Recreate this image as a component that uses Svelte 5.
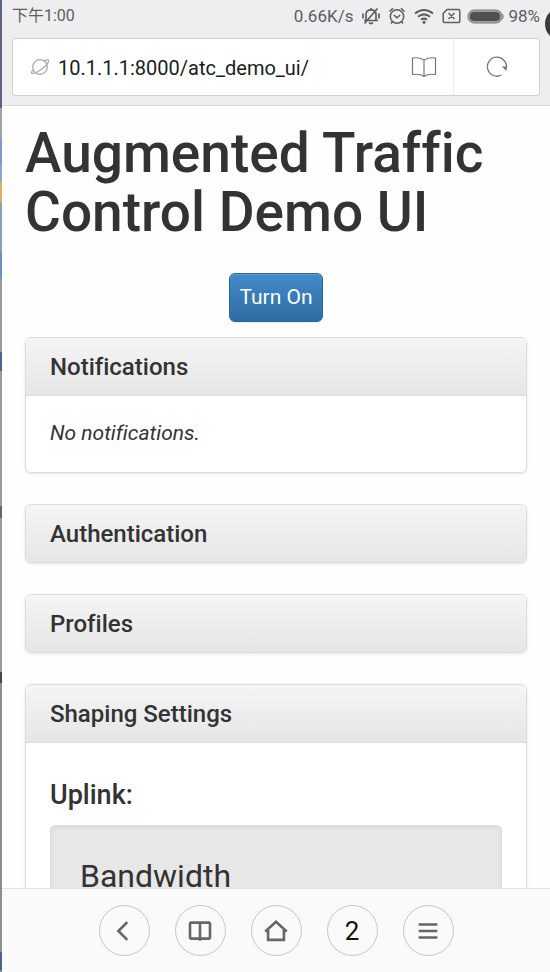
<script>
  const address = '10.1.1.1:8000/atc_demo_ui/';
  let shaping = $state(false);
</script>

<div class="desktop">
  <div class="edge" aria-hidden="true"></div>

  <div class="screen">
    <header>
      <div class="status">
        <span class="time">下午1:00</span>
        <span class="rate">0.66K/s</span>
        <svg class="bell" width="20" height="20" viewBox="0 0 20 20" fill="none" stroke="#5d5d60" stroke-width="1.7">
          <path d="M5 14V8.500C5 5.300 7 3.800 10 3.800S15 5.300 15 8.500V14M3 14.500H17M8 16.500Q10 18.500 12 16.500M16.500 2.500L3.500 17.500M10 3.500V2M2 7.500V12.500M18 7.500V12.500" />
        </svg>
        <svg class="alarm" width="18" height="20" viewBox="0 0 18 20" fill="none" stroke="#5d5d60" stroke-width="1.500">
          <circle cx="9" cy="10.500" r="6.700" />
          <path d="M1.500 5.500L5 2.200M16.500 5.500L13 2.200M5.800 9L9 11.800L12.200 9M4.500 15.500L3 17.500M13.500 15.500L15 17.500" />
        </svg>
        <svg class="wifi" width="20" height="18" viewBox="0 0 20 18" fill="none" stroke="#5d5d60" stroke-width="2">
          <path d="M1 6.500Q10 -.5 19 6.500M4 9.800Q10 5 16 9.800M7 12.800Q10 10.500 13 12.800" />
          <circle cx="10" cy="15.200" r="1.500" fill="#5d5d60" stroke="none" />
        </svg>
        <svg class="sim" width="19" height="16" viewBox="0 0 19 16" fill="none" stroke="#5d5d60" stroke-width="1.500">
          <path d="M5 1.500H16.500Q17.800 1.500 17.800 2.800V13.200Q17.800 14.500 16.500 14.500H2.500Q1.200 14.500 1.200 13.200V5.500ZM6.500 5L12.500 11M12.500 5L6.500 11" />
        </svg>
        <svg class="battery" width="37" height="15" viewBox="0 0 37 15">
          <rect x="1" y="1" width="34" height="13" rx="6" fill="#a2a2a4" stroke="#7c7c7f" stroke-width="1" />
          <path d="M35.500 5Q37 7.500 35.500 10" fill="none" stroke="#7c7c7f" />
          <rect x="3" y="3" width="30" height="9" rx="4" fill="#505052" />
        </svg>
        <span class="percent">98%</span>
      </div>

      <div class="address">
        <svg width="20" height="20" viewBox="0 0 20 20" fill="none" stroke="#aaa" stroke-width="1.300">
          <circle cx="10" cy="10" r="7.300" />
          <path d="M14 4Q18.800 1.500 18.600 4.200C18 7.500 13 11.500 8.500 14.200C4.500 16.700 1 17.300 1.500 15.500Q1.900 14 3.600 12.500" />
        </svg>
        <input aria-label="Address" type="text" value={address} />
        <button class="reader" aria-label="Reading list">
          <svg width="26" height="22" viewBox="0 0 26 22" fill="none" stroke="#777" stroke-width="1.200">
            <path d="M13 4Q8 1 1.500 2V18.500Q9 17.500 13 20.500Q17 17.500 24.500 18.500V2Q18 1 13 4V20.500" />
          </svg>
        </button>
        <button class="reload" aria-label="Reload">
          <svg width="24" height="24" viewBox="0 0 24 24" fill="none" stroke="#777" stroke-width="1.300">
            <path d="M16.500 20A9.500 9.500 0 1 1 21.300 13" />
            <path d="M16.800 11.500H22.300L21.300 16Z" fill="#777" stroke="none" />
          </svg>
        </button>
      </div>
    </header>

    <main>
      <h1>Augmented Traffic Control Demo UI</h1>
      <button class="toggle" aria-pressed={shaping} onclick={() => (shaping = !shaping)}>
        {shaping ? 'Turn Off' : 'Turn On'}
      </button>

      <section class="panel">
        <h4>Notifications</h4>
        <div class="body"><p><i>No notifications.</i></p></div>
      </section>
      <section class="panel"><h4>Authentication</h4></section>
      <section class="panel"><h4>Profiles</h4></section>
      <section class="panel">
        <h4>Shaping Settings</h4>
        <div class="body settings">
          <h3>Uplink:</h3>
          <div class="well"><h2>Bandwidth</h2></div>
        </div>
      </section>
    </main>

    <nav>
      <button aria-label="Back">
        <svg width="30" height="30" viewBox="0 0 30 30"><path d="M18.500 5.500L9 15L18.500 24.500" /></svg>
      </button>
      <button aria-label="Bookmarks">
        <svg width="30" height="30" viewBox="0 0 30 30"><path d="M15 6H5.500Q4.300 6 4.300 7.200V22Q4.300 23.200 5.500 23.200H24.500Q25.700 23.200 25.700 22V7.200Q25.700 6 24.500 6H15M15 6V25.500" /></svg>
      </button>
      <button aria-label="Home">
        <svg width="30" height="30" viewBox="0 0 30 30"><path d="M3.500 15.500L15 5L26.500 15.500M6.500 14V24.500H23.500V14" /></svg>
      </button>
      <button aria-label="2 open tabs">2</button>
      <button aria-label="Menu">
        <svg width="30" height="30" viewBox="0 0 30 30"><path d="M5 8H25M5 15H25M5 22H25" /></svg>
      </button>
    </nav>
  </div>

  <div class="bubble" aria-hidden="true"></div>
</div>

<style>
  :global(body) {
    margin: 0;
  }

  .desktop {
    position: relative;
    display: flex;
    height: 100vh;
    overflow: hidden;
    font-family: Roboto, 'Noto Sans CJK SC', sans-serif;
    font-variant-ligatures: none;
    color: #333;
  }

  .desktop * {
    box-sizing: border-box;
  }

  button,
  input {
    font-family: inherit;
    border: 0;
    padding: 0;
    background: none;
  }

  svg {
    display: block;
    flex: none;
  }

  .edge {
    flex: none;
    width: 2px;
    background: linear-gradient(
      #5c6285 108px, #a2a2a2 108px 138px, #7b9bcf 138px 165px, #90a6c6 165px 182px,
      #d6b066 182px 203px, #8c9fb8 203px 252px, #6f90bd 252px 279px, #999 279px 352px,
      #48658f 352px 371px, #999 371px 506px, #75615c 506px 518px, #999 518px 672px,
      #4d4438 672px 683px, #8e8e8e 683px 952px, #4b6388 952px 970px, #888 970px
    );
  }

  .screen {
    flex: 1;
    min-width: 0;
    display: flex;
    flex-direction: column;
    background: #fefefe;
  }

  header {
    flex: none;
    padding: 0 10px 9px;
    background: #eeeef0;
    border-bottom: 1px solid #d9d9db;
  }

  .status {
    display: flex;
    align-items: center;
    height: 38px;
    padding-bottom: 6px;
    font-size: 17px;
    line-height: 20px;
    color: #5d5d60;
  }

  .time {
    margin-right: auto;
    font-size: 16px;
  }

  .bell { margin-left: 8px; }
  .alarm { margin-left: 7px; }
  .wifi { margin-left: 8px; }
  .sim { margin-left: 8px; }
  .battery { margin-left: 6px; }
  .percent { margin-left: 4px; }

  .address {
    display: flex;
    align-items: center;
    height: 58px;
    padding-left: 17px;
    border: 1px solid #cfcfd1;
    border-radius: 3px;
    background: #fff;
  }

  .address input {
    flex: 1;
    min-width: 0;
    height: 26px;
    padding-top: 2px;
    margin-left: 8px;
    font-size: 20px;
    color: #1c1c1c;
    outline: 0;
  }

  .reader,
  .reload {
    align-self: stretch;
    display: flex;
    align-items: center;
    justify-content: center;
  }

  .reader {
    width: 58px;
  }

  .reload {
    width: 86px;
    border-left: 1px solid #ececec;
  }

  main {
    flex: 1;
    min-height: 0;
    overflow: hidden;
    display: flex;
    flex-direction: column;
    padding: 18px 23px 0;
  }

  h1,
  h2,
  h3,
  h4,
  p {
    margin: 0;
  }

  h1 {
    font-size: 55px;
    line-height: 59px;
    font-weight: 500;
  }

  .toggle {
    flex: none;
    align-self: center;
    height: 49px;
    margin: 31px 0 15px;
    padding: 0 9px 2px;
    border: 1px solid #2b669a;
    border-radius: 6px;
    background: linear-gradient(#428bca, #2d6ca2);
    color: #fff;
    font-size: 21px;
    box-shadow: inset 0 1px 0 rgba(255, 255, 255, 0.15), 0 1px 1px rgba(0, 0, 0, 0.075);
  }

  .panel {
    flex: none;
    margin-bottom: 31px;
    border: 1px solid #ddd;
    border-radius: 6px;
    background: #fff;
    box-shadow: 0 1px 3px rgba(0, 0, 0, 0.1);
    overflow: hidden;
  }

  h4 {
    height: 57px;
    padding: 0 24px;
    background: linear-gradient(#f5f5f5, #e6e6e6);
    font-size: 24px;
    line-height: 58px;
    font-weight: 500;
  }

  .body {
    padding: 23px 24px 24px;
    border-top: 1px solid #ddd;
  }

  .body p {
    font-size: 21px;
    line-height: 29px;
  }

  .settings {
    padding-top: 37px;
  }

  h3 {
    font-size: 27px;
    line-height: 31px;
    font-weight: 500;
  }

  .well {
    margin-top: 14px;
    padding: 32px 29px;
    border: 1px solid #dcdcdc;
    border-radius: 5px;
    background: #e7e7e7;
    box-shadow: inset 0 2px 4px rgba(0, 0, 0, 0.06);
  }

  h2 {
    font-size: 32px;
    line-height: 36px;
    font-weight: 400;
  }

  nav {
    flex: none;
    display: flex;
    justify-content: center;
    gap: 25px;
    height: 84px;
    padding-top: 16px;
    border-top: 1px solid #e3e3e3;
    background: #fafafa;
  }

  nav button {
    display: flex;
    align-items: center;
    justify-content: center;
    width: 51px;
    height: 51px;
    border: 1px solid #c6c6c6;
    border-radius: 50%;
    color: #111;
    font-size: 26px;
  }

  nav svg {
    width: 28px;
    height: 28px;
    fill: none;
    stroke: #666;
    stroke-width: 2.8;
  }

  .bubble {
    position: absolute;
    top: 7px;
    right: -29px;
    width: 34px;
    height: 34px;
    border-radius: 50%;
    background: #3a3a3c;
  }
</style>
